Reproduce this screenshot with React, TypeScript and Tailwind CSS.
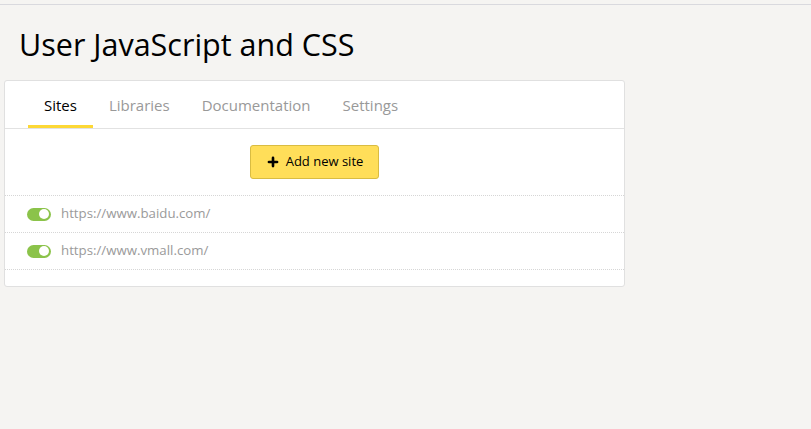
import { Plus } from "lucide-react";

const sites = ["https://www.baidu.com/", "https://www.vmall.com/"];
const tabs = ["Sites", "Libraries", "Documentation", "Settings"];

function Toggle() {
  return (
    <span className="flex h-[13px] w-[24px] items-center justify-end rounded-full bg-[#8bc34a] px-[2px]">
      <span className="h-[10px] w-[10px] rounded-full bg-white" />
    </span>
  );
}

export default function App() {
  return (
    <div className="min-h-[429px] bg-[#f5f4f2] pt-[4px] font-['Open_Sans',sans-serif]">
      <div className="border-t border-[#d9d9de]">
        <h1 className="px-[19px] pt-[19px] pb-[16px] text-[30.5px] leading-[40px] text-black">
          User JavaScript and CSS
        </h1>
        <div className="ml-[4px] w-[621px] rounded-[3px] border border-[#e0e0e0] bg-white">
          <div className="flex border-b border-[#e2e2e2] px-[23px]">
            {tabs.map((t, i) => (
              <div
                key={t}
                className={
                  i === 0
                    ? "border-b-[3px] border-[#fdd835] px-4 pt-[13px] pb-[9px] text-[15px] leading-[22px] text-black"
                    : "border-b-[3px] border-transparent px-4 pt-[13px] pb-[9px] text-[15px] leading-[22px] text-[#999]"
                }
              >
                {t}
              </div>
            ))}
          </div>
          <div className="flex justify-center border-b border-dotted border-[#d6d6d6] py-[16px]">
            <button className="flex h-[34px] items-center gap-[6px] rounded-[3px] border border-[#d9bc42] bg-[#ffde59] px-[15px] text-[13px] text-black">
              <Plus size={14} strokeWidth={4.5} />
              Add new site
            </button>
          </div>
          {sites.map((s) => (
            <div
              key={s}
              className="flex h-[37px] items-center gap-[10px] border-b border-dotted border-[#d6d6d6] px-[22px]"
            >
              <Toggle />
              <span className="text-[13.25px] text-[#9a9a9a]">{s}</span>
            </div>
          ))}
          <div className="h-[16px]" />
        </div>
      </div>
    </div>
  );
}
